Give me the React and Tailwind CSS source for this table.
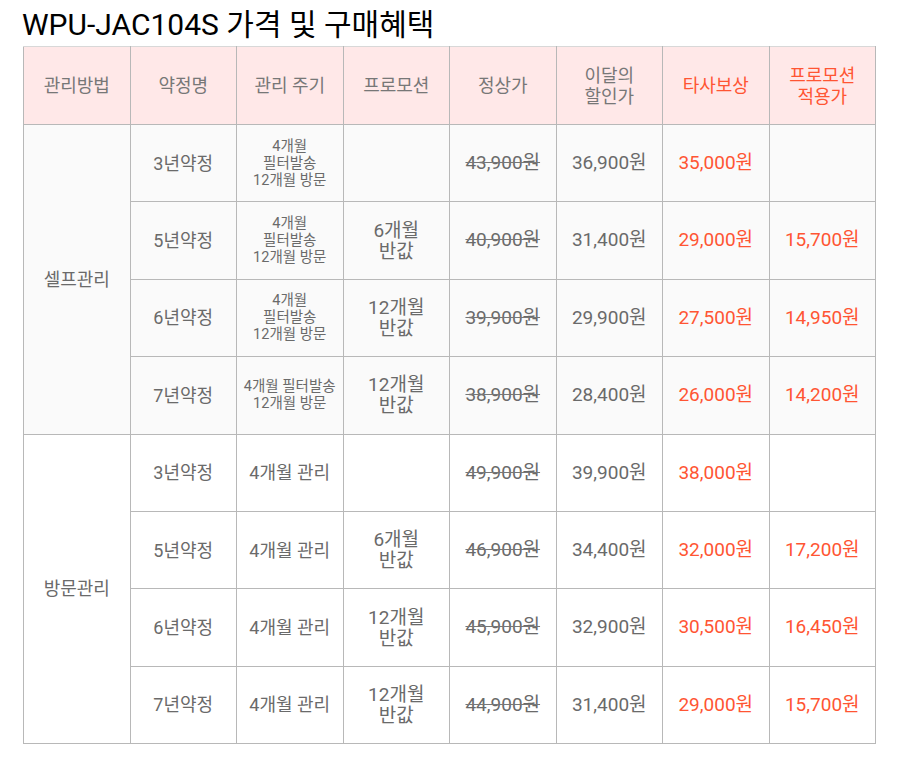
import React from "react";

const FONT = "font-['Roboto','Noto_Sans_CJK_KR',sans-serif]";

const rows = [
  { group: "셀프관리", plan: "3년약정", cycle: ["4개월", "필터발송", "12개월 방문"], promo: null, normal: "43,900원", sale: "36,900원", comp: "35,000원", final: "" },
  { plan: "5년약정", cycle: ["4개월", "필터발송", "12개월 방문"], promo: ["6개월", "반값"], normal: "40,900원", sale: "31,400원", comp: "29,000원", final: "15,700원" },
  { plan: "6년약정", cycle: ["4개월", "필터발송", "12개월 방문"], promo: ["12개월", "반값"], normal: "39,900원", sale: "29,900원", comp: "27,500원", final: "14,950원" },
  { plan: "7년약정", cycle: ["4개월 필터발송", "12개월 방문"], promo: ["12개월", "반값"], normal: "38,900원", sale: "28,400원", comp: "26,000원", final: "14,200원" },
  { group: "방문관리", plan: "3년약정", cycle: "4개월 관리", promo: null, normal: "49,900원", sale: "39,900원", comp: "38,000원", final: "" },
  { plan: "5년약정", cycle: "4개월 관리", promo: ["6개월", "반값"], normal: "46,900원", sale: "34,400원", comp: "32,000원", final: "17,200원" },
  { plan: "6년약정", cycle: "4개월 관리", promo: ["12개월", "반값"], normal: "45,900원", sale: "32,900원", comp: "30,500원", final: "16,450원" },
  { plan: "7년약정", cycle: "4개월 관리", promo: ["12개월", "반값"], normal: "44,900원", sale: "31,400원", comp: "29,000원", final: "15,700원" },
];

const td = "border border-[#b8b8b8] text-center align-middle p-0";
const th = `${td} border-t-[#d8d8d8] font-normal`;

export default function App() {
  return (
    <div className={`bg-white w-[897px] h-[764px] ${FONT}`}>
      <h1 className="pl-[22px] pt-[7px] h-[46px] text-[30px] leading-[35px] text-black font-normal">
        WPU-JAC104S 가격 및 구매혜택
      </h1>
      <table className="ml-[23px] w-[853px] table-fixed border-collapse">
        <thead>
          <tr className="h-[78px] bg-[#ffe8e8] text-[18px] leading-[21px]">
            <th className={`${th} text-[#777]`}>관리방법</th>
            <th className={`${th} text-[#777]`}>약정명</th>
            <th className={`${th} text-[#777]`}>관리 주기</th>
            <th className={`${th} text-[#777]`}>프로모션</th>
            <th className={`${th} text-[#777]`}>정상가</th>
            <th className={`${th} text-[#777]`}>
              이달의
              <br />
              할인가
            </th>
            <th className={`${th} text-[#ff5533]`}>타사보상</th>
            <th className={`${th} text-[#ff5533]`}>
              프로모션
              <br />
              적용가
            </th>
          </tr>
        </thead>
        <tbody>
          {rows.map((r, i) => (
            <tr key={i} className={`h-[77.4px] text-[#6a6a6a] ${i < 4 ? "bg-[#fafafa]" : "bg-white"}`}>
              {r.group && (
                <td rowSpan={4} className={`${td} text-[18px]`}>
                  {r.group}
                </td>
              )}
              <td className={`${td} text-[18px]`}>{r.plan}</td>
              {Array.isArray(r.cycle) ? (
                <td className={`${td} text-[14.5px] leading-[17px]`}>
                  {r.cycle.map((c, j) => (
                    <div key={j}>{c}</div>
                  ))}
                </td>
              ) : (
                <td className={`${td} text-[18px]`}>{r.cycle}</td>
              )}
              <td className={`${td} text-[19px] leading-[21px]`}>
                {r.promo &&
                  r.promo.map((p, j) => (
                    <div key={j}>{p}</div>
                  ))}
              </td>
              <td className={`${td} text-[19px] line-through decoration-[#777]`}>{r.normal}</td>
              <td className={`${td} text-[19px]`}>{r.sale}</td>
              <td className={`${td} text-[19px] text-[#ff5533]`}>{r.comp}</td>
              <td className={`${td} text-[19px] text-[#ff5533]`}>{r.final}</td>
            </tr>
          ))}
        </tbody>
      </table>
    </div>
  );
}
